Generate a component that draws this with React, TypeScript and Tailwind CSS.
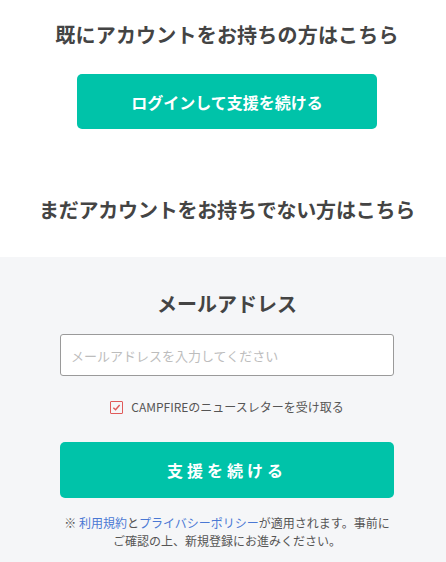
import React from 'react';

const font = { fontFamily: '"Noto Sans CJK JP", "Noto Sans", sans-serif' };

export default function App() {
    return (
        <div className="w-full h-[562px] overflow-hidden flex flex-col bg-white text-[#444]" style={font}>
            {/* Existing account */}
            <section className="flex flex-col items-center pl-[8px] pt-[20px] pb-[32px]">
                <h2 className="text-[20px] leading-[30px] font-bold tracking-[0.2px]">既にアカウントをお持ちの方はこちら</h2>
                <button className="mt-[24px] w-[300px] h-[55px] rounded-[5px] bg-[#00c3a9] text-white text-[16px] font-bold">
                    ログインして支援を続ける
                </button>
                <h2 className="mt-[66px] text-[20px] leading-[30px] font-bold tracking-[-0.2px]">まだアカウントをお持ちでない方はこちら</h2>
            </section>

            {/* Signup */}
            <section className="flex-1 bg-[#f5f6f8] flex flex-col items-center pl-[8px] pt-[32px]">
                <h3 className="text-[20px] leading-[30px] font-bold">メールアドレス</h3>
                <input
                    type="email"
                    placeholder="メールアドレスを入力してください"
                    className="mt-[15px] w-[334px] h-[42px] bg-white border border-[#9a9a9a] rounded-[3px] px-[10px] text-[13px] placeholder:text-[#bdbdbd] outline-none"
                    style={font}
                />
                <label className="mt-[22px] flex items-center gap-[8px] text-[12px] leading-[18px] text-[#555]">
                    <span className="w-[13px] h-[13px] border-[1.5px] border-[#e05a5a] rounded-[1px] flex items-center justify-center">
                        <svg width="9" height="9" viewBox="0 0 8 8" fill="none">
                            <path d="M1.2 4.2 L3.2 6 L6.8 1.8" stroke="#e05a5a" strokeWidth="1.3" />
                        </svg>
                    </span>
                    CAMPFIREのニュースレターを受け取る
                </label>
                <button className="mt-[26px] w-[334px] h-[56px] rounded-[5px] bg-[#00c3a9] text-white text-[16px] font-bold tracking-[4px]">
                    支援を続ける
                </button>
                <p className="mt-[16px] text-[12px] leading-[18px] text-[#555] text-center">
                    ※ <a className="text-[#4a78d4]">利用規約</a>と<a className="text-[#4a78d4]">プライバシーポリシー</a>が適用されます。事前に<br />
                    ご確認の上、新規登録にお進みください。
                </p>
            </section>
        </div>
    );
}
